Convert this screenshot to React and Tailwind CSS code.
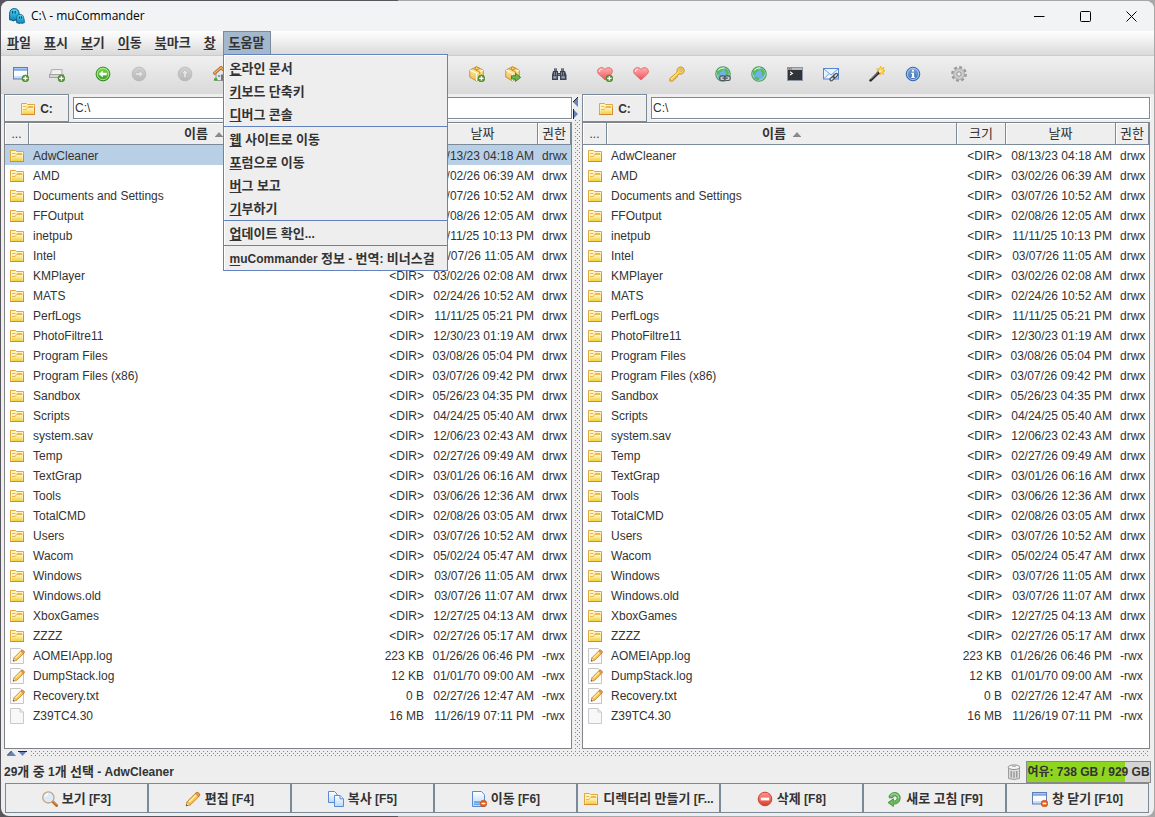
import React from "react";

const latin = "font-['Liberation_Sans','Noto_Sans_CJK_KR',sans-serif]";

const folders = [
  ["AdwCleaner", "08/13/23 04:18 AM"],
  ["AMD", "03/02/26 06:39 AM"],
  ["Documents and Settings", "03/07/26 10:52 AM"],
  ["FFOutput", "02/08/26 12:05 AM"],
  ["inetpub", "11/11/25 10:13 PM"],
  ["Intel", "03/07/26 11:05 AM"],
  ["KMPlayer", "03/02/26 02:08 AM"],
  ["MATS", "02/24/26 10:52 AM"],
  ["PerfLogs", "11/11/25 05:21 PM"],
  ["PhotoFiltre11", "12/30/23 01:19 AM"],
  ["Program Files", "03/08/26 05:04 PM"],
  ["Program Files (x86)", "03/07/26 09:42 PM"],
  ["Sandbox", "05/26/23 04:35 PM"],
  ["Scripts", "04/24/25 05:40 AM"],
  ["system.sav", "12/06/23 02:43 AM"],
  ["Temp", "02/27/26 09:49 AM"],
  ["TextGrap", "03/01/26 06:16 AM"],
  ["Tools", "03/06/26 12:36 AM"],
  ["TotalCMD", "02/08/26 03:05 AM"],
  ["Users", "03/07/26 10:52 AM"],
  ["Wacom", "05/02/24 05:47 AM"],
  ["Windows", "03/07/26 11:05 AM"],
  ["Windows.old", "03/07/26 11:07 AM"],
  ["XboxGames", "12/27/25 04:13 AM"],
  ["ZZZZ", "02/27/26 05:17 AM"],
].map(([name, date]) => ({ name, date, size: "<DIR>", perm: "drwx", icon: "folder" }));

const files = [
  ...folders,
  { name: "AOMEIApp.log", size: "223 KB", date: "01/26/26 06:46 PM", perm: "-rwx", icon: "textFile" },
  { name: "DumpStack.log", size: "12 KB", date: "01/01/70 09:00 AM", perm: "-rwx", icon: "textFile" },
  { name: "Recovery.txt", size: "0 B", date: "02/27/26 12:47 AM", perm: "-rwx", icon: "textFile" },
  { name: "Z39TC4.30", size: "16 MB", date: "11/26/19 07:11 PM", perm: "-rwx", icon: "file" },
];

function SharedGradients() {
  const g = (id, a, b) => (
    <linearGradient id={id} x1="0" y1="0" x2="0" y2="1">
      <stop offset="0" stopColor={a} />
      <stop offset="1" stopColor={b} />
    </linearGradient>
  );
  return (
    <svg width="0" height="0" className="absolute" aria-hidden="true">
      <defs>
        {g("gFolder", "#fff6c4", "#f3cf3a")}
        {g("gGreen", "#7ddc4c", "#2f9a1c")}
        {g("gGrey", "#d2d2d2", "#b9b9b9")}
        {g("gBlue", "#ffffff", "#b9d8f8")}
        {g("gRed", "#ff9a8c", "#dc3b30")}
        {g("gHeart", "#ffb0b0", "#f0525c")}
        {g("gBox", "#fff3b8", "#efb945")}
        {g("gInfo", "#7fa8dd", "#3c70b8")}
        {g("gSlime", "#55dcf8", "#0a7fb4")}
      </defs>
    </svg>
  );
}

const plusBadge = (
  <g>
    <circle cx="12.4" cy="12.4" r="3.4" fill="#5a9a3a" stroke="#3f7a24" strokeWidth="0.6" />
    <path d="M12.4 10.2v4.4M10.2 12.4h4.4" stroke="#fff" strokeWidth="1.4" />
  </g>
);
const minusBadge = (
  <g>
    <circle cx="12.5" cy="12.5" r="3.3" fill="#e8641e" stroke="#b8440c" strokeWidth="0.6" />
    <path d="M10.6 12.5h3.8" stroke="#fff" strokeWidth="1.4" />
  </g>
);
const pencil = (
  <g>
    <path d="M1.2 14.8l1-4.2L11 1.8q1.3-1 2.8.4t.5 2.9L5.4 13.8z" fill="#f9c64a" stroke="#b97a22" strokeWidth="0.9" />
    <path d="M3.8 11.2l8-8" stroke="#fff0a6" strokeWidth="1.4" />
    <path d="M10.4 2.6l3.2 3.1 1-1.2q.4-1.2-.9-2.4t-2.3-.5z" fill="#e89a6a" stroke="#b5652f" strokeWidth="0.6" />
    <path d="M2.3 10.7l3 3-4.1 1.2z" fill="#f6dfb4" stroke="#a9793b" strokeWidth="0.5" />
    <path d="M1.2 14.9l.4-1.7 1.2 1.2z" fill="#333" />
  </g>
);
const box = (
  <g stroke="#c58a24" strokeWidth="0.9" strokeLinejoin="round">
    <path d="M7.5.8l6.8 3.3v7L7.5 15 .8 11.1v-7z" fill="url(#gBox)" />
    <path d="M.8 4.1l6.7 3.4 6.8-3.4M7.5 7.5V15" fill="none" stroke="#fffbe0" strokeWidth="1.1" />
    <path d="M4 2.6l6.8 3.3v2.2M6 1.7L7.5.8 11 2.5 7.3 4.2z" fill="#f7cf62" />
  </g>
);
const globe = (
  <g>
    <circle cx="8" cy="8" r="7.2" fill="#6fb2ea" stroke="#4d9b58" strokeWidth="1.2" />
    <circle cx="8" cy="8" r="6.2" fill="none" stroke="#b5e6b0" strokeWidth="0.8" />
    <path d="M2.2 5.2q2-3.4 5.4-3.6l1 1.6-1.6 2L5 6.2 4.600 8 2.600 9.200Q1.400 7 2.200 5.200zM10 2.200q3.600 1.400 4 4.800l-1.600 3-2-1.400.6-2.400L9.400 5zM4 10.400l3 .6 1.600 1.800-1.200 1.400Q4.400 14 3.200 12z" fill="#56bb58" />
    <path d="M3.200 4.400Q5.400 1.600 9 2.200" fill="none" stroke="#c9f2c4" strokeWidth="1.200" />
  </g>
);
const windowShape = (
  <g>
    <rect x="0.5" y="1.5" width="14" height="11.5" fill="url(#gBlue)" stroke="#5d7fb6" />
    <path d="M1 5h13v5H1z" fill="#fbfcff" />
    <path d="M1 2h13v2.800H1z" fill="#7da6e3" />
    <path d="M1 2.600h13" stroke="#a9c9f4" />
  </g>
);
const blob = (
  <path d="M0 12V6q0-6 5-6t5.400 6l1 4.200q.2 2.600-2 2.200L8 13l-2-.6-2 .8-2-.8z" fill="url(#gSlime)" stroke="#0b4f77" />
);

const drawings = {
  folder: (
    <g>
      <path d="M1.500 13.500V2.500h5l1 1h7v10z" fill="#fff3c2" stroke="#dfa93f" />
      <path d="M2.500 13V8.500h4l1-1.500h6v6z" fill="url(#gFolder)" />
      <path d="M3 5.500h3.500M8 5.500h5M3 8.500h3.200l1.200-2h6.100" stroke="#e5b348" fill="none" strokeWidth="0.900" />
      <path d="M1 13.500h14M14.500 7v6.500" stroke="#d68a35" />
    </g>
  ),
  textFile: (
    <g>
      <path d="M1.500.5h9.800l3.200 3.200v11.800h-13z" fill="#fbfbfb" stroke="#c6c6c6" />
      <g transform="translate(3.200 1) scale(.82)">{pencil}</g>
    </g>
  ),
  file: <path d="M1.500.5h9.500v3.500h3.500v11.500h-13zM11 .8L14.300 4" fill="#f8f8f8" stroke="#c9c9c9" strokeLinejoin="round" />,
  newWindow: <g>{windowShape}{plusBadge}</g>,
  server: (
    <g>
      <path d="M2.500 3.500h10.500v6H.8z" fill="#e2e2e2" stroke="#b2b2b2" />
      <path d="M4 4.600h8v4H3.200z" fill="#f1f1f1" />
      <rect x="0.500" y="8.500" width="14" height="3" fill="#d4d4d4" stroke="#a4a4a4" />
      {plusBadge}
    </g>
  ),
  back: (
    <g>
      <circle cx="8" cy="8" r="6.900" fill="url(#gGreen)" stroke="#2c8420" strokeWidth="0.900" />
      <circle cx="8" cy="8" r="5.700" fill="none" stroke="#b5ec98" strokeWidth="0.900" />
      <path d="M3.800 8l4-3.600v2.300h4v2.600h-4v2.300z" fill="#fff" />
    </g>
  ),
  forward: (
    <g>
      <circle cx="8" cy="8" r="6.900" fill="url(#gGrey)" stroke="#b4b4b4" strokeWidth="0.700" />
      <path d="M12.200 8l-4-3.600v2.300h-4v2.600h4v2.300z" fill="#e6e6e6" stroke="#adadad" strokeWidth="0.500" />
    </g>
  ),
  up: (
    <g>
      <circle cx="8" cy="8" r="6.900" fill="url(#gGrey)" stroke="#b4b4b4" strokeWidth="0.700" />
      <path d="M8 3.800l3.600 4H9.300v4H6.700v-4H4.400z" fill="#e6e6e6" stroke="#adadad" strokeWidth="0.500" />
    </g>
  ),
  home: (
    <g>
      <path d="M3 7v7.500h10.500V7L8 3z" fill="#e4e4e4" stroke="#888" strokeWidth="0.800" />
      <path d="M.5 8L8 1.500 15.500 8" fill="none" stroke="#b56a28" strokeWidth="3" />
      <path d="M1 7.600L8 1.600l7 6" fill="none" stroke="#eeb676" strokeWidth="1.300" />
      <path d="M5 9h2.200v2H5z" fill="#7c9ac2" />
      <path d="M8 8.500h3.800v6H8z" fill="#777" />
      <path d="M.8 14.800q0-3 2-3t1.600 3z" fill="#4da53c" />
    </g>
  ),
  stop: <circle cx="8" cy="8" r="6.900" fill="url(#gGrey)" stroke="#b4b4b4" />,
  mark: <path d="M2 8l4 4 8-9" stroke="#4da53c" strokeWidth="2.400" fill="none" />,
  unmark: <path d="M3 3l10 10M13 3L3 13" stroke="#c94b3c" strokeWidth="2.400" />,
  swap: <path d="M2 5h10l-3-3M14 11H4l3 3" stroke="#3c70b8" strokeWidth="2" fill="none" />,
  equal: <path d="M2 5.500h12M2 10.500h12" stroke="#3c70b8" strokeWidth="2" />,
  pack: <g>{box}{plusBadge}</g>,
  unpack: (
    <g>
      {box}
      <path d="M6.500 9.800h4V7.400l5.200 4-5.200 4V13h-4z" fill="#6db64e" stroke="#3c7e28" strokeWidth="0.900" />
    </g>
  ),
  binoculars: (
    <g>
      <path d="M3 2.500h3v2.300H3zM10 2.500h3v2.300h-3zM2 5h5v2h2V5h5l1.500 4v5H9v-4H7v4H1V9z" fill="#3b4250" />
      <path d="M2.200 10.200h3.400v2.200H2.200zM10.400 10.200h3.400v2.200h-3.400z" fill="#98a3b8" />
      <path d="M3.500 6v3.500M5.500 6v3.500M10.500 6v3.500M12.500 6v3.500M3.500 3.500h2M10.500 3.500h2M7 8.500h2" stroke="#8e99ad" strokeWidth="0.800" />
    </g>
  ),
  heart: (
    <g>
      <path d="M8 14L1.400 7.800Q-.2 5.400 1.200 3.200 3.400.6 6.400 2L8 3.400 9.600 2q3-1.400 5.200 1.200 1.400 2.200-.2 4.600z" fill="url(#gHeart)" stroke="#e0666c" strokeWidth="0.900" />
      <path d="M2.400 6Q2.200 3.400 4.800 3" fill="none" stroke="#ffe0e0" strokeWidth="1.200" />
    </g>
  ),
  key: (
    <g>
      <path d="M8.100 6.200Q7.400 3.200 9.600 1.500q2.400-1.400 4.600.4 2 2.200.4 4.800-1.600 2-4.600 1.300L8.600 9.400l-.2 1.500-1.600.2-.2 1.700-1.700.2-.3 1.500-1.400.6H.9v-2.600z" fill="#f8d257" stroke="#c98a1d" strokeWidth="0.900" strokeLinejoin="round" />
      <path d="M2 13l6.600-6.400" stroke="#fff2ac" strokeWidth="0.900" />
      <circle cx="12" cy="4.200" r="1.200" fill="#eee" stroke="#c98a1d" strokeWidth="0.700" />
    </g>
  ),
  globe,
  globeLink: (
    <g>
      {globe}
      <rect x="4.800" y="9.900" width="5.400" height="4.600" rx="1.800" fill="#c9ced4" stroke="#4a525b" strokeWidth="1.200" />
      <rect x="9.800" y="9.900" width="5.400" height="4.600" rx="1.800" fill="#c9ced4" stroke="#4a525b" strokeWidth="1.200" />
      <path d="M7.400 12.200h5.400" stroke="#4a525b" strokeWidth="1.200" />
    </g>
  ),
  terminal: (
    <g>
      <rect x="0.500" y="1.500" width="15" height="13" fill="#303338" stroke="#8c95a3" />
      <path d="M1 2h14v2H1z" fill="#b6bcc6" />
      <path d="M1.400 2.200H3v1.200H1.400z" fill="#d33" />
      <path d="M3.400 2.200H5v1.200H3.400z" fill="#3a3" />
      <path d="M3 5.800l2.400 1.600L3 9" stroke="#fff" fill="none" strokeWidth="1.100" />
    </g>
  ),
  mail: (
    <g>
      <rect x="0.500" y="2.500" width="15" height="10.500" fill="#eaf3ff" stroke="#5685cf" />
      <path d="M1 3l7 6 7-6M1 12.600l5-5M15 12.600l-5-5" stroke="#6d9be0" fill="none" />
      <path d="M8.400 13.400l5-4.600" stroke="#4b525c" strokeWidth="4" strokeLinecap="round" />
      <path d="M8.400 13.400l1.200-1.100M12 10.100l1.400-1.300" stroke="#dfe3e8" strokeWidth="1.500" strokeLinecap="round" />
    </g>
  ),
  wand: (
    <g>
      <path d="M11.600.3l.9 2.400L15 1.500l-.9 2.400 1.800.9-2 1 .7 2.600-2.300-1.200L11 9.200 9.900 6.800 7.400 7l1.600-2L7.800 2.800l2.500.4z" fill="#ffd95a" stroke="#f0a012" strokeWidth="0.700" />
      <path d="M1.600 14.400l8.600-8.400" stroke="#2a2a2a" strokeWidth="2.600" strokeLinecap="round" />
      <path d="M1.800 13.400l7.200-7" stroke="#a4a4a4" strokeWidth="0.800" />
      <path d="M10 6.400l1.600-1.600" stroke="#fff6d0" strokeWidth="2.200" />
    </g>
  ),
  info: (
    <g>
      <circle cx="8" cy="8" r="6.800" fill="url(#gInfo)" stroke="#3868ad" />
      <circle cx="8" cy="8" r="5.600" fill="none" stroke="#aecbf0" strokeWidth="0.900" />
      <path d="M7 3.800h2v1.800H7zM6.400 6.800H9v4h.8V12H6.300v-1.200H7V8h-.6z" fill="#fff" />
    </g>
  ),
  gear: (
    <g>
      <circle cx="8" cy="8" r="6.600" fill="none" stroke="#9a9a9a" strokeWidth="2.600" strokeDasharray="2.900 2.283" />
      <circle cx="8" cy="8" r="4.200" fill="#d4d4d4" stroke="#cbcbcb" strokeWidth="3" />
      <circle cx="8" cy="8" r="5.500" fill="none" stroke="#9c9c9c" strokeWidth="0.600" />
      <circle cx="8" cy="8" r="2.200" fill="#ececec" stroke="#8a8a8a" strokeWidth="0.900" />
    </g>
  ),
  magnifier: (
    <g>
      <path d="M10.600 10.600l4 4" stroke="#b5692c" strokeWidth="2.800" strokeLinecap="round" />
      <path d="M10.800 10.200l3.600 3.600" stroke="#e9a767" strokeWidth="0.900" />
      <circle cx="6.400" cy="6.400" r="5.600" fill="#dcebfa" stroke="#c9a27c" strokeWidth="1.300" />
      <path d="M3 6.200Q3.400 3.400 6.200 3" stroke="#fff" strokeWidth="1.400" fill="none" />
    </g>
  ),
  pencil,
  copy: (
    <g stroke="#5a8ad2" fill="url(#gBlue)">
      <path d="M.5.5h6l2.500 2.500v8.500H.5z" />
      <path d="M6.500 4.500H12l3.500 3.300v7.700h-9z" />
      <path d="M12 4.800v3h3.200" fill="#eaf4ff" />
    </g>
  ),
  move: (
    <g>
      <path d="M1.500.5h8.800l3.200 3.200v11.800h-12z" fill="url(#gBlue)" stroke="#5a8ad2" />
      <path d="M3 11h6M3 13.200h6" stroke="#4f9be0" strokeWidth="1.300" />
      {minusBadge}
    </g>
  ),
  remove: (
    <g>
      <circle cx="8" cy="8" r="6.800" fill="url(#gRed)" stroke="#c9453b" />
      <path d="M3.800 6.600h8.400v2.800H3.800z" fill="#fff" />
    </g>
  ),
  refresh: (
    <g>
      <path d="M3 5Q5.400.9 10 1.600 14.600 3 14.200 7.800 13.400 13 7.400 13.200v2.300L2 11.600l5.400-3.800v2.400q3.400 0 3.800-2.800 0-2.400-2.200-2.600-1.800 0-2 1.800l-3.600.4z" fill="#6ab860" stroke="#3a8a36" strokeWidth="0.800" />
      <path d="M4.600 4.400Q7 2 10 3q3 1.400 2.800 4.600" fill="none" stroke="#b4e2a8" strokeWidth="0.900" />
    </g>
  ),
  closeWindow: <g>{windowShape}{minusBadge}</g>,
  trash: (
    <g>
      <path d="M2.500 3.500v11q5.500 2 11 0v-11z" fill="#dcdcdc" stroke="#8a8a8a" strokeWidth="0.800" />
      <path d="M5.200 7v6.600M8 7.400v6.600M10.800 7v6.600" stroke="#8c8c8c" strokeWidth="1.200" />
      <ellipse cx="8" cy="3.200" rx="5.800" ry="2.300" fill="#f4f4f4" stroke="#8a8a8a" strokeWidth="0.900" />
      <path d="M6 2.200h4" stroke="#999" strokeWidth="0.900" />
    </g>
  ),
  app: (
    <g>
      <g transform="translate(.6 .6) scale(.93)">{blob}</g>
      <g transform="translate(7.600 6.400) scale(.7)">{blob}</g>
      <path d="M3.600 3v2.600M6.200 3v2.600M10.400 8.600v1.800M12.400 8.600v1.800" stroke="#063c5c" strokeWidth="1.100" />
    </g>
  ),
};
drawings.heartAdd = <g>{drawings.heart}{plusBadge}</g>;

function Icon({ name }) {
  return (
    <svg viewBox="0 0 16 16" className="block size-4 shrink-0" aria-hidden="true">
      {drawings[name]}
    </svg>
  );
}

/* Hangul is set one pixel larger than the Latin text beside it. */
function Mixed({ text }) {
  return text.split(/([\uac00-\ud7a3]+)/).map((part, i) =>
    i % 2 ? (
      <span key={i} className="text-[13px]">
        {part}
      </span>
    ) : (
      part
    )
  );
}

function Mnemonic({ text }) {
  return (
    <span className="whitespace-pre">
      <span className="underline underline-offset-2">
        <Mixed text={text[0]} />
      </span>
      <Mixed text={text.slice(1)} />
    </span>
  );
}

function TitleBar() {
  return (
    <header className="flex h-[30px] items-center bg-[#f1f3f5] pl-2 text-black">
      <Icon name="app" />
      <h1 className="ml-1.5 flex-1 font-['Open_Sans','Noto_Sans',sans-serif] text-xs">C:\ - muCommander</h1>
      <button type="button" aria-label="최소화" className="flex w-[46px] justify-center">
        <svg viewBox="0 0 11 11" className="h-[11px] w-[11px]" stroke="#000" fill="none"><path d="M0 5.500h10.500" /></svg>
      </button>
      <button type="button" aria-label="최대화" className="flex w-[46px] justify-center">
        <svg viewBox="0 0 11 11" className="h-[11px] w-[11px]" stroke="#000" fill="none"><rect x=".5" y=".5" width="10" height="10" rx="1" /></svg>
      </button>
      <button type="button" aria-label="닫기" className="flex w-[46px] justify-center">
        <svg viewBox="0 0 11 11" className="h-[11px] w-[11px]" stroke="#000" fill="none"><path d="M.5.5l10 10M10.500.5l-10 10" /></svg>
      </button>
    </header>
  );
}

const helpGroups = [
  ["온라인 문서", "키보드 단축키", "디버그 콘솔"],
  ["웹 사이트로 이동", "포럼으로 이동", "버그 보고", "기부하기"],
  ["업데이트 확인..."],
  ["muCommander 정보 - 번역: 비너스걸"],
];

function MenuBar() {
  return (
    <nav className="flex h-[25px] gap-px border-b border-[#ccc] bg-linear-to-b from-white to-[#dadada] pb-px font-bold">
      {["파일", "표시", "보기", "이동", "북마크", "창"].map((m) => (
        <button key={m} type="button" className="px-1.5">
          <Mnemonic text={m} />
        </button>
      ))}
      <div className="relative flex">
        <button type="button" aria-expanded="true" className="border-t border-r border-l border-[#7a8a99] bg-[#a3b8cc] px-[5px]">
          <Mnemonic text="도움말" />
        </button>
        <div role="menu" className="absolute top-full left-0 z-10 w-[225px] border border-[#6382bf] bg-[#eee] pt-0.5 shadow-[inset_1px_1px_0_#fff]">
          {helpGroups.map((group, i) => (
            <div key={i} className={i ? "border-t border-[#6382bf] pt-px" : ""}>
              {group.map((item) => (
                <button key={item} type="button" role="menuitem" className="flex h-[23px] w-full items-center px-1.5">
                  <Mnemonic text={item} />
                </button>
              ))}
            </div>
          ))}
        </div>
      </div>
    </nav>
  );
}

const toolGroups = [
  [["newWindow", "새 창"], ["server", "서버 연결"]],
  [["back", "뒤로"], ["forward", "앞으로"]],
  [["up", "상위 폴더"], ["home", "홈"]],
  [["stop", "중지"]],
  [["mark", "선택"], ["unmark", "선택 해제"]],
  [["swap", "폴더 교환"], ["equal", "같은 폴더"]],
  [["pack", "압축"], ["unpack", "압축 풀기"]],
  [["binoculars", "찾기"]],
  [["heartAdd", "북마크 추가"], ["heart", "북마크 편집"], ["key", "자격 증명"]],
  [["globeLink", "서버 연결"], ["globe", "서버 표시"], ["terminal", "명령 실행"], ["mail", "메일 보내기"]],
  [["wand", "일괄 이름 변경"], ["info", "속성"]],
  [["gear", "환경 설정"]],
];

function ToolBar() {
  return (
    <div role="toolbar" className="flex h-[38px] items-center gap-2.5 bg-linear-to-b from-[#f0f0f0] to-[#d9d9d9] pb-0.5 pl-0.5">
      {toolGroups.map((group, i) => (
        <div key={i} className="flex">
          {group.map(([icon, label]) => (
            <button key={icon} type="button" aria-label={label} className="flex w-9 justify-center">
              <Icon name={icon} />
            </button>
          ))}
        </div>
      ))}
    </div>
  );
}

const th = "border-r border-b border-[#7a8a99] bg-[#eee] p-0 pt-px text-center font-normal shadow-[inset_1px_1px_0_#fff]";

function Panel({ label, selected }) {
  return (
    <section aria-label={label} className="flex min-w-0 flex-1 flex-col">
      <div className="flex h-7 gap-1">
        <button type="button" className="flex w-[65px] items-center justify-center gap-1 border border-[#7a8a99] pt-px font-bold shadow-[inset_1px_1px_0_#fff]">
          <Icon name="folder" />
          C:
        </button>
        <input
          aria-label="경로"
          defaultValue="C:\"
          className="mt-[3px] h-[22px] min-w-0 flex-1 border border-[#7a8a99] bg-white px-px shadow-[1px_1px_0_#fff] outline-none"
        />
      </div>
      <div className="flex-1 border border-[#808488] bg-white">
        <table className="w-full table-fixed border-separate border-spacing-0">
          <colgroup>
            <col className="w-6" />
            <col />
            <col className="w-[49px]" />
            <col className="w-[110px]" />
            <col className="w-[33px]" />
          </colgroup>
          <thead>
            <tr className="h-[22px]">
              <th className={th}>...</th>
              <th className={th}>
                <span className="flex items-center justify-center gap-[7px] font-bold">
                  <Mixed text="이름" />
                  <svg viewBox="0 0 8 5" className="h-[5px] w-2" aria-hidden="true">
                    <path d="M0 5l4-4.500 4 4.500z" fill="#8a8a8a" stroke="#777" strokeWidth=".5" />
                  </svg>
                </span>
              </th>
              <th className={th}><Mixed text="크기" /></th>
              <th className={th}><Mixed text="날짜" /></th>
              <th className={th}><Mixed text="권한" /></th>
            </tr>
          </thead>
          <tbody>
            {files.map((f, i) => (
              <tr key={f.name} className={selected === i ? "h-5 bg-[#b8cfe5]" : "h-5"}>
                <td className="p-0 pt-px pl-1"><Icon name={f.icon} /></td>
                <td className="truncate p-0 pt-0.5 pl-1">{f.name}</td>
                <td className="p-0 pt-0.5 pr-1 text-right whitespace-nowrap">{f.size}</td>
                <td className="p-0 pt-0.5 pr-1 text-right whitespace-nowrap">{f.date}</td>
                <td className="p-0 pt-0.5 pl-1 whitespace-nowrap">{f.perm}</td>
              </tr>
            ))}
          </tbody>
        </table>
      </div>
    </section>
  );
}

const dots =
  "bg-[conic-gradient(at_1px_1px,transparent_270deg,#7a8a99_0),conic-gradient(at_1px_1px,transparent_270deg,#7a8a99_0)] bg-[length:4px_4px] bg-[position:0_0,2px_2px]";

function VerticalSplitter() {
  return (
    <div className="flex w-2.5 flex-col pt-0.5 pl-px">
      <svg viewBox="0 0 6 24" className="h-6 w-1.5" aria-hidden="true">
        <path d="M5 1v10L0 6z" fill="#6382bf" />
        <path d="M5 1L0 6" stroke="#222" />
        <path d="M0 13v10l5-5z" fill="#6382bf" />
        <path d="M.5 13v10" stroke="#222" />
      </svg>
      <div className={`ml-0.5 w-[5px] flex-1 ${dots}`} />
    </div>
  );
}

function HorizontalSplitter() {
  return (
    <div className="flex h-3 items-start gap-1 pt-0.5 pl-1.5">
      <svg viewBox="0 0 20 5" className="h-[5px] w-5" aria-hidden="true">
        <path d="M0 5l4.500-5L9 5z" fill="#6382bf" />
        <path d="M0 4.500L4.500 0" stroke="#222" />
        <path d="M11 0h9l-4.500 5z" fill="#6382bf" />
        <path d="M11 .5h9" stroke="#222" />
      </svg>
      <div className={`mr-1.5 h-[5px] flex-1 ${dots}`} />
    </div>
  );
}

const commands = [
  ["magnifier", "보기 [F3]"],
  ["pencil", "편집 [F4]"],
  ["copy", "복사 [F5]"],
  ["move", "이동 [F6]"],
  ["folder", "디렉터리 만들기 [F..."],
  ["remove", "삭제 [F8]"],
  ["refresh", "새로 고침 [F9]"],
  ["closeWindow", "창 닫기 [F10]"],
];

function StatusBar() {
  const free = 738;
  const total = 929;
  return (
    <div className="flex h-[22px] items-center justify-between px-[3px] font-bold">
      <span><Mixed text="29개 중 1개 선택 - AdwCleaner" /></span>
      <div className="flex items-center gap-1">
        <Icon name="trash" />
        <div
          className="flex h-[22px] w-[125px] items-center justify-center border border-[#8a8a8a] whitespace-nowrap"
          style={{ background: `linear-gradient(to right, #8fd41f ${(free / total) * 100}%, #d4d4d4 0)` }}
        >
          {`여유: ${free} GB / ${total} GB`}
        </div>
      </div>
    </div>
  );
}

export default function App() {
  return (
    <div className="min-h-screen bg-[linear-gradient(to_right,#57565c_398px,#a8a8a8_398px)] p-px">
      <SharedGradients />
      <div className={`flex min-h-[calc(100vh-2px)] flex-col overflow-hidden rounded-lg bg-[#eee] text-xs leading-4 text-[#333] ${latin}`}>
        <TitleBar />
        <MenuBar />
        <ToolBar />
        <main className="flex flex-1 pr-1 pl-[3px]">
          <Panel label="왼쪽 패널" selected={0} />
          <VerticalSplitter />
          <Panel label="오른쪽 패널" />
        </main>
        <HorizontalSplitter />
        <StatusBar />
        <footer className="flex h-[33px] pr-[5px] pb-[3px] pl-1 font-bold">
          {commands.map(([icon, label]) => (
            <button key={icon} type="button" className="flex min-w-0 flex-1 items-center justify-center gap-1 border border-[#7a8a99] px-px pt-px">
              <Icon name={icon} />
              <span className="whitespace-nowrap"><Mixed text={label} /></span>
            </button>
          ))}
        </footer>
      </div>
    </div>
  );
}
